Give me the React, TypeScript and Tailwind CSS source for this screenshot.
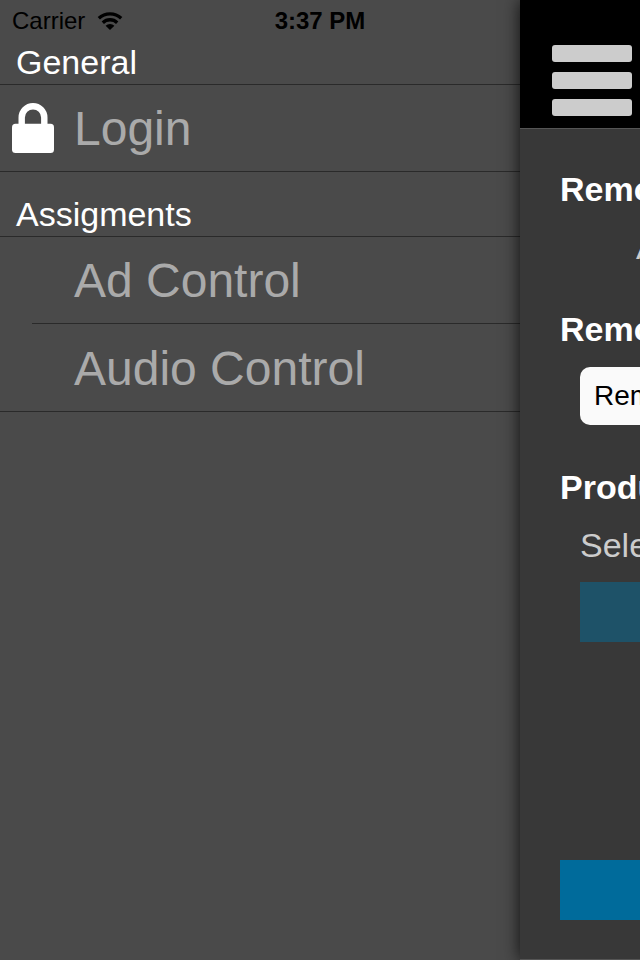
import { useState } from 'react';

const sections = [
  {
    title: 'General',
    headerClass: 'pt-10',
    items: [{ name: 'Login', href: '#login', locked: true }],
  },
  {
    title: 'Assigments',
    headerClass: 'pt-5',
    items: [
      { name: 'Ad Control', href: '#ad-control', locked: false },
      { name: 'Audio Control', href: '#audio-control', locked: false },
    ],
  },
];

function LockIcon() {
  return (
    <svg viewBox="0 0 42 50" className="h-[50px] w-[42px]" aria-hidden="true">
      <path d="M9.7 24V14.500a11.300 11.300 0 0 1 22.600 0V24" fill="none" stroke="#fff" strokeWidth="6.400" />
      <rect x="0" y="20.800" width="42" height="29.200" rx="3.500" fill="#fff" />
    </svg>
  );
}

function WifiIcon() {
  return (
    <svg viewBox="0 0 26 18" className="h-[18px] w-[26px]" aria-hidden="true">
      <g fill="none" stroke="#000" strokeWidth="3.300">
        <path d="M1.800 6.300a16.200 16.200 0 0 1 22.400 0" />
        <path d="M5.800 10.700a10.300 10.300 0 0 1 14.400 0" />
      </g>
      <path d="M13 18 8.600 13.700a6.300 6.300 0 0 1 8.800 0z" fill="#000" />
    </svg>
  );
}

function StatusBar() {
  return (
    <div className="pointer-events-none absolute inset-x-0 top-0 z-10 grid h-[42px] grid-cols-3 items-center px-3 text-2xl text-black">
      <div className="flex items-center gap-3">
        <span>Carrier</span>
        <WifiIcon />
      </div>
      <span className="text-center font-bold">3:37 PM</span>
    </div>
  );
}

function Menu() {
  return (
    <nav className="min-w-0 flex-1">
      {sections.map((section) => (
        <section key={section.title}>
          <h2 className={`border-b border-[#2a2a2a] px-4 text-[34px] leading-[44px] text-white ${section.headerClass}`}>
            {section.title}
          </h2>
          <ul className="border-b border-[#2a2a2a]">
            {section.items.map((item, i) => (
              <li key={item.name}>
                {i > 0 && <div className="ml-8 h-px bg-[#2a2a2a]" />}
                <a
                  href={item.href}
                  className={`flex items-center pl-3 text-5xl text-[#aaa] ${i > 0 ? 'h-[87px]' : 'h-[86px]'}`}
                >
                  <span className="w-[62px] shrink-0">{item.locked && <LockIcon />}</span>
                  <span className="pt-[2px]">{item.name}</span>
                </a>
              </li>
            ))}
          </ul>
        </section>
      ))}
    </nav>
  );
}

function ContentPanel() {
  const [name, setName] = useState('Remote');

  return (
    <main className="flex w-[120px] shrink-0 flex-col shadow-[0_0_16px_rgba(0,0,0,0.8)]">
      <div className="flex flex-1 flex-col overflow-hidden border-b border-[#555] bg-[#383838]">
        <header className="flex h-[129px] items-end border-b border-[#555] bg-black pb-3 pl-8">
          <button type="button" aria-label="Toggle menu" className="flex w-20 flex-col gap-[10px]">
            <span className="h-[17px] w-full rounded-[3px] bg-[#ccc]" />
            <span className="h-[17px] w-full rounded-[3px] bg-[#ccc]" />
            <span className="h-[17px] w-full rounded-[3px] bg-[#ccc]" />
          </button>
        </header>

        <div className="flex w-80 flex-1 flex-col pt-10 pb-[39px] pl-10 text-[34px] leading-10 text-white">
          <h2 className="font-bold">Remo</h2>
          <p className="mt-[18px] pl-[76px] text-[#ccc]">A</p>

          <label htmlFor="remote-name" className="mt-[42px] font-bold">Remo</label>
          <input
            id="remote-name"
            type="text"
            value={name}
            onChange={(e) => setName(e.target.value)}
            className="mt-[18px] ml-5 h-[58px] rounded-[10px] bg-[#fafafa] px-[14px] text-[28px] text-black"
          />

          <h2 className="mt-[42px] font-bold">Produ</h2>
          <p className="mt-[18px] pl-5 text-[#ccc]">Sele</p>
          <button type="button" aria-label="Select product" className="mt-[17px] ml-5 h-[60px] bg-[#1e5268]" />

          <button type="button" aria-label="Submit" className="mt-auto h-[60px] bg-[#006b9b]" />
        </div>
      </div>
    </main>
  );
}

export default function App() {
  return (
    <div className="relative flex min-h-screen overflow-hidden bg-[#4a4a4a] font-['Liberation_Sans',Arial,sans-serif]">
      <StatusBar />
      <Menu />
      <ContentPanel />
    </div>
  );
}
